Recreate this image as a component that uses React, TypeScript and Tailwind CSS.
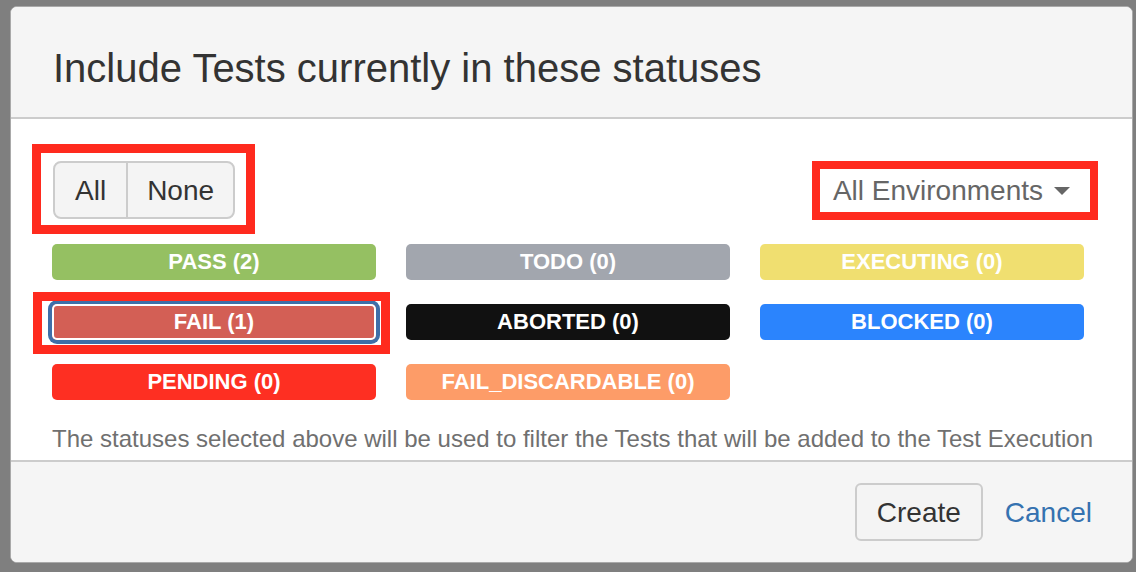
import React from "react";

type Status = { label: string; bg: string; focused?: boolean };

const statuses: Status[] = [
  { label: "PASS (2)", bg: "bg-[#95c062]" },
  { label: "TODO (0)", bg: "bg-[#a2a6ae]" },
  { label: "EXECUTING (0)", bg: "bg-[#f0df70]" },
  { label: "FAIL (1)", bg: "bg-[#d35f55]", focused: true },
  { label: "ABORTED (0)", bg: "bg-[#111111]" },
  { label: "BLOCKED (0)", bg: "bg-[#2b84fd]" },
  { label: "PENDING (0)", bg: "bg-[#fe2f22]" },
  { label: "FAIL_DISCARDABLE (0)", bg: "bg-[#fd9c68]" },
];

function StatusButton({ s }: { s: Status }) {
  const btn = (
    <button
      className={`h-[36px] w-[324px] rounded-[5px] ${s.bg} text-white text-[22px] font-bold leading-none flex items-center justify-center ${
        s.focused ? "shadow-[0_0_0_4px_#3f6fa8,inset_0_0_0_2px_#ffffff]" : ""
      }`}
    >
      {s.label}
    </button>
  );
  if (!s.focused) return btn;
  return (
    <div className="relative">
      {btn}
      {/* annotation box */}
      <div className="pointer-events-none absolute -left-[19px] -right-[14px] -top-[12px] -bottom-[14px] border-[9px] border-[#ff2a1e]" />
    </div>
  );
}

export default function App() {
  return (
    <div className="w-[1136px] h-[572px] overflow-hidden bg-[#7f7f7f] pt-[6px] pl-[10px] font-['Liberation_Sans',Arial,sans-serif]">
      <div className="w-[1123px] h-[557px] flex flex-col overflow-hidden rounded-[7px] border border-[#a9a9a9] bg-white">
        {/* header */}
        <div className="h-[112px] shrink-0 border-b-2 border-[#cccccc] bg-[#f5f5f5] pl-[42px] pt-[41px]">
          <h2 className="text-[40px] leading-none text-[#333333]">
            Include Tests currently in these statuses
          </h2>
        </div>

        {/* body */}
        <div className="flex-1 pl-[41px] pr-[42px] pt-[42px]">
          <div className="flex items-center justify-between">
            <div className="relative ml-[1px]">
              <div className="flex h-[58px] overflow-hidden rounded-[8px] border-2 border-[#cccccc] bg-[#f4f4f4] text-[28px] text-[#333333]">
                <button className="px-[20px] pt-[1px]">All</button>
                <button className="border-l-2 border-[#cccccc] px-[19px] pt-[1px]">None</button>
              </div>
              <div className="pointer-events-none absolute -left-[21px] -right-[20px] -top-[17px] -bottom-[15px] border-[9px] border-[#ff2a1e]" />
            </div>

            <div className="relative">
              <button className="flex h-[43px] items-center gap-[11px] pl-[13px] pr-[20px] pt-[1px] text-[28px] text-[#666666]">
                All Environments
                <svg width="16" height="8" viewBox="0 0 16 8">
                  <polygon points="0,0 16,0 8,8" fill="#666666" />
                </svg>
              </button>
              <div className="pointer-events-none absolute -inset-[8px] border-[8px] border-[#ff2a1e]" />
            </div>
          </div>

          <div className="mt-[25px] grid grid-cols-[324px_324px_324px] gap-x-[30px] gap-y-[24px]">
            {statuses.map((s) => (
              <StatusButton key={s.label} s={s} />
            ))}
          </div>

          <p className="mt-[22px] whitespace-nowrap text-[24px] leading-[34px] text-[#707070]">
            The statuses selected above will be used to filter the Tests that will be added to the Test Execution
          </p>
        </div>

        {/* footer */}
        <div className="h-[102px] shrink-0 flex items-center justify-end gap-[22px] border-t-2 border-[#cccccc] bg-[#f5f5f5] pr-[40px]">
          <button className="h-[58px] rounded-[6px] border-2 border-[#cccccc] bg-[#f4f4f4] px-[20px] pt-[1px] text-[28px] text-[#333333]">
            Create
          </button>
          <button className="pt-[1px] text-[28px] text-[#3572b0]">Cancel</button>
        </div>
      </div>
    </div>
  );
}
